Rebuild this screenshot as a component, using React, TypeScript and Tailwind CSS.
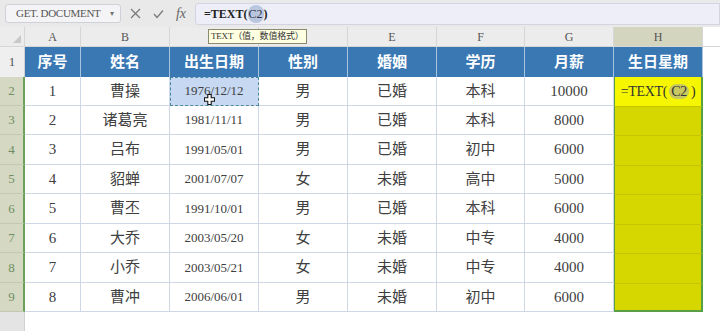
import React from 'react';

const cols = [
    { key: 'A', w: 56, title: '序号' },
    { key: 'B', w: 89, title: '姓名' },
    { key: 'C', w: 89, title: '出生日期' },
    { key: 'D', w: 89, title: '性别' },
    { key: 'E', w: 89, title: '婚姻' },
    { key: 'F', w: 88, title: '学历' },
    { key: 'G', w: 89, title: '月薪' },
    { key: 'H', w: 89, title: '生日星期' },
];

const rows = [
    ['1', '曹操', '1976/12/12', '男', '已婚', '本科', '10000'],
    ['2', '诸葛亮', '1981/11/11', '男', '已婚', '本科', '8000'],
    ['3', '吕布', '1991/05/01', '男', '已婚', '初中', '6000'],
    ['4', '貂蝉', '2001/07/07', '女', '未婚', '高中', '5000'],
    ['5', '曹丕', '1991/10/01', '男', '已婚', '本科', '6000'],
    ['6', '大乔', '2003/05/20', '女', '未婚', '中专', '4000'],
    ['7', '小乔', '2003/05/21', '女', '未婚', '中专', '4000'],
    ['8', '曹冲', '2006/06/01', '男', '未婚', '初中', '6000'],
];

const heights = [29, 29, 30, 29, 30, 29, 30, 29];

const font = { fontFamily: '"Liberation Serif", "Noto Sans CJK SC", serif' };

export default function App() {
    return (
        <div className="w-[720px] h-[331px] overflow-hidden bg-white text-[#404040]" style={font}>
            {/* Formula toolbar */}
            <div className="h-[27px] bg-[#e9e9e9] flex items-center">
                <div className="ml-[5px] w-[116px] h-[19px] bg-[#f4f4f6] border border-[#d0d0d8] rounded-[3px] flex items-center justify-between pl-[10px] pr-[6px]">
                    <span className="text-[11px] text-[#555] tracking-[-0.3px]">GET. DOCUMENT</span>
                    <span className="text-[8px] text-[#777]">▾</span>
                </div>
                <div className="w-[74px] flex items-center justify-center gap-[12px] text-[#777]">
                    <svg width="11" height="11" viewBox="0 0 11 11"><path d="M1 1 L10 10 M10 1 L1 10" stroke="#777" strokeWidth="1.2" /></svg>
                    <svg width="11" height="10" viewBox="0 0 11 10"><path d="M1 5 L4 8.5 L10 1.5" stroke="#777" strokeWidth="1.2" fill="none" /></svg>
                    <span className="italic text-[14px] text-[#666]">fx</span>
                </div>
                <div className="flex-1 h-[22px] bg-[#eeeef8] border border-[#d4d4de] rounded-l-[3px] flex items-center pl-[8px]">
                    <span className="text-[12px] font-bold text-[#222]">=TEXT(</span>
                    <span className="text-[12px] text-[#334] bg-[#b9c6e0] rounded-full px-[1px]">C2</span>
                    <span className="text-[12px] font-bold text-[#222]">)</span>
                </div>
            </div>

            {/* Column letters */}
            <div className="relative flex h-[20px] bg-[#ececec] border-b border-[#d6d6d6] text-[12px] text-[#555]">
                <div className="w-[25px] border-r border-[#d6d6d6] flex items-end justify-end pr-[3px] pb-[3px]">
                    <svg width="8" height="8" viewBox="0 0 8 8"><path d="M8 0 L8 8 L0 8 Z" fill="#c8c8c8" /></svg>
                </div>
                {cols.map((c) => (
                    <div
                        key={c.key}
                        className={`flex items-center justify-center border-r border-[#d6d6d6] ${c.key === 'H' ? 'bg-[#d3d5bf]' : ''}`}
                        style={{ width: c.w }}
                    >
                        {c.key === 'C' || c.key === 'D' ? '' : c.key}
                    </div>
                ))}
                <div className="flex-1 bg-white" />
                <div className="absolute left-[208px] top-[2px] h-[15px] px-[2px] bg-[#ffffe1] border border-[#8a8a70] flex items-center text-[9px] text-[#333] whitespace-nowrap tracking-[-0.2px]">
                    TEXT（值，数值格式）
                </div>
            </div>

            {/* Header row */}
            <div className="flex h-[30px]">
                <div className="w-[25px] bg-[#efefef] border-r border-[#d0d0d0] flex items-center justify-center text-[13px] text-[#555]">1</div>
                {cols.map((c) => (
                    <div
                        key={c.key}
                        className="bg-[#3a78b4] border-r border-[#a8c4e0] flex items-center justify-center text-white text-[15px] font-bold"
                        style={{ width: c.w }}
                    >
                        {c.title}
                    </div>
                ))}
                <div className="flex-1 bg-white" />
            </div>

            {/* Data rows */}
            {rows.map((r, i) => (
                <div key={i} className="flex" style={{ height: heights[i] }}>
                    <div className="w-[25px] bg-[#d5d8c3] border-r-2 border-[#6aa05a] border-b border-b-[#c4c8b0] flex items-center justify-center text-[13px] text-[#6f8f62]">
                        {i + 2}
                    </div>
                    {r.map((v, j) => {
                        const isSel = i === 0 && j === 2;
                        return (
                            <div
                                key={j}
                                className={`relative flex items-center justify-center border-r border-b border-[#cfd6e6] ${j === 2 ? 'text-[13px]' : 'text-[15px]'} ${isSel ? 'bg-[#c6d8f2] outline-1 outline-dashed outline-[#4a8aa0] -outline-offset-1' : ''}`}
                                style={{ width: cols[j].w }}
                            >
                                {v}
                                {isSel && (
                                    <svg className="absolute left-[34px] top-[17px]" width="11" height="11" viewBox="0 0 13 13">
                                        <path d="M4.5 0.5 H8.5 V4.5 H12.5 V8.5 H8.5 V12.5 H4.5 V8.5 H0.5 V4.5 H4.5 Z" fill="#fff" stroke="#111" strokeWidth="1.3" />
                                    </svg>
                                )}
                            </div>
                        );
                    })}
                    <div
                        className={`flex items-center justify-center border-l border-r-2 border-[#58a043] ${i === 0 ? 'bg-[#f6f600] border-t-0' : 'bg-[#d6d600] border-t border-t-[#c4c400]'} ${i === 7 ? 'border-b-2 border-b-[#58a043]' : ''}`}
                        style={{ width: cols[7].w }}
                    >
                        {i === 0 && (
                            <span className="text-[14px] text-[#333] whitespace-nowrap tracking-[-0.3px]">
                                =TEXT(<span className="bg-[#c8c860] rounded-full px-[2px] mx-[2px]">C2</span>)
                            </span>
                        )}
                    </div>
                    <div className="flex-1 bg-white" />
                </div>
            ))}

            {/* Empty area */}
            <div className="flex h-[20px]">
                <div className="w-[25px] bg-[#e4e4e4] border-r border-[#d0d0d0]" />
                <div className="flex-1 bg-white" />
            </div>
        </div>
    );
}
